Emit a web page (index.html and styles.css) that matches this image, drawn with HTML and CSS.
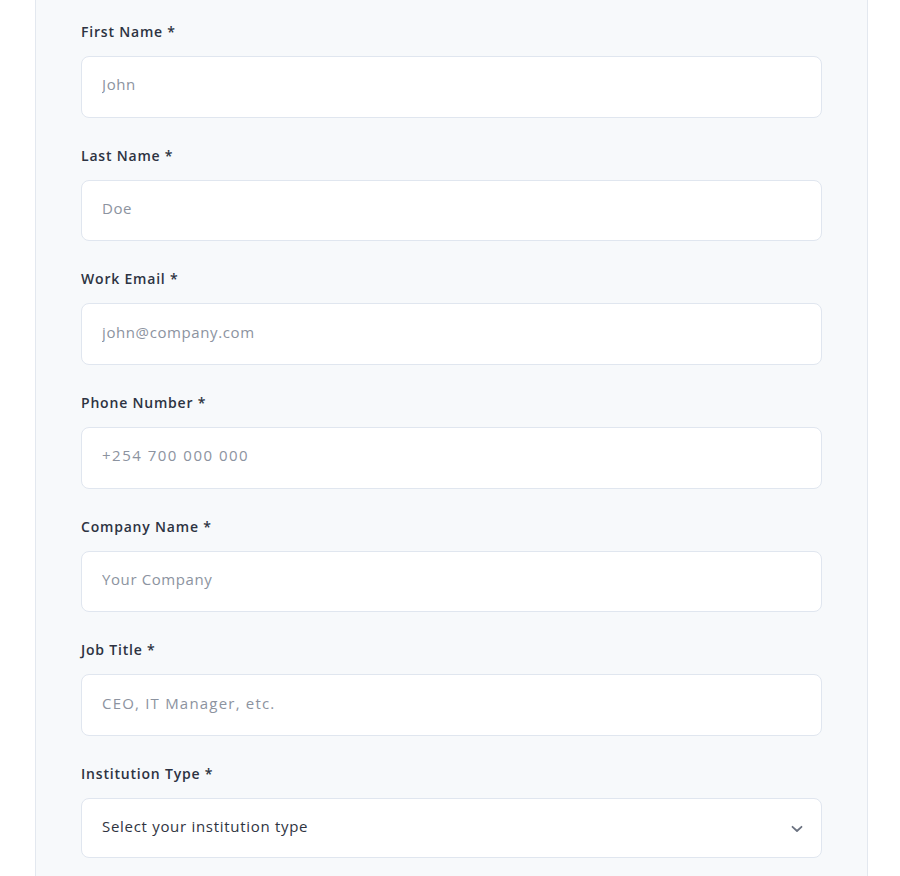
FILE: index.html
```html
<!DOCTYPE html>
<html lang="en">
<head>
<meta charset="utf-8">
<title>Form</title>
<link rel="stylesheet" href="styles.css">
</head>
<body>
<div class="panel">
  <form class="form">
    <div class="field">
      <label class="label" for="fn">First Name *</label>
      <input class="input" id="fn" type="text" placeholder="John">
    </div>
    <div class="field">
      <label class="label" for="ln">Last Name *</label>
      <input class="input" id="ln" type="text" placeholder="Doe">
    </div>
    <div class="field">
      <label class="label" for="em">Work Email *</label>
      <input class="input" id="em" type="email" placeholder="john@company.com">
    </div>
    <div class="field">
      <label class="label" for="ph">Phone Number *</label>
      <input class="input input-digits" id="ph" type="tel" placeholder="+254 700 000 000">
    </div>
    <div class="field">
      <label class="label" for="co">Company Name *</label>
      <input class="input" id="co" type="text" placeholder="Your Company">
    </div>
    <div class="field">
      <label class="label" for="jt">Job Title *</label>
      <input class="input input-wide" id="jt" type="text" placeholder="CEO, IT Manager, etc.">
    </div>
    <div class="field">
      <label class="label" for="it">Institution Type *</label>
      <div class="select">
        <span class="select-text">Select your institution type</span>
        <svg class="chevron" width="12" height="8" viewBox="0 0 12 8" aria-hidden="true"><path d="M1.5 1.8 L6 6 L10.5 1.8" fill="none" stroke="#6b7280" stroke-width="1.8" stroke-linecap="round" stroke-linejoin="round"/></svg>
      </div>
    </div>
  </form>
</div>
</body>
</html>
```
FILE: styles.css
```css
html, body {
  margin: 0;
  padding: 0;
  background: #ffffff;
}
body {
  font-family: "Open Sans", "Noto Sans", sans-serif;
  height: 876px;
  overflow: hidden;
}
.panel {
  margin-left: 35px;
  width: 833px;
  box-sizing: border-box;
  min-height: 900px;
  background: #f7f9fb;
  border-left: 1px solid #e3e8ef;
  border-right: 1px solid #e3e8ef;
  padding: 22px 45px 0 45px;
}
.form {
  display: flex;
  flex-direction: column;
  gap: 28px;
}
.field {
  display: flex;
  flex-direction: column;
  gap: 14px;
}
.label {
  font-size: 14px;
  line-height: 20px;
  font-weight: 600;
  color: #2d3342;
  letter-spacing: 0.8px;
}
.input {
  height: 61.67px;
  box-sizing: border-box;
  border: 1px solid #e0e6ef;
  border-radius: 8px;
  background: #ffffff;
  padding: 0 20px 5px 20px;
  font-family: inherit;
  font-size: 15px;
  letter-spacing: 0.6px;
  color: #374151;
  outline: none;
}
.input-digits {
  letter-spacing: 1.5px;
}
.input-wide {
  letter-spacing: 1.2px;
}
.input::placeholder {
  color: #8c93a0;
  opacity: 1;
}
.select {
  height: 60.5px;
  box-sizing: border-box;
  border: 1px solid #e0e6ef;
  border-radius: 8px;
  background: #ffffff;
  padding: 0 18px 4px 20px;
  display: flex;
  align-items: center;
  justify-content: space-between;
}
.select-text {
  font-size: 15px;
  letter-spacing: 0.7px;
  color: #2f3441;
}
.chevron {
  display: block;
  margin-top: 6px;
}
```
